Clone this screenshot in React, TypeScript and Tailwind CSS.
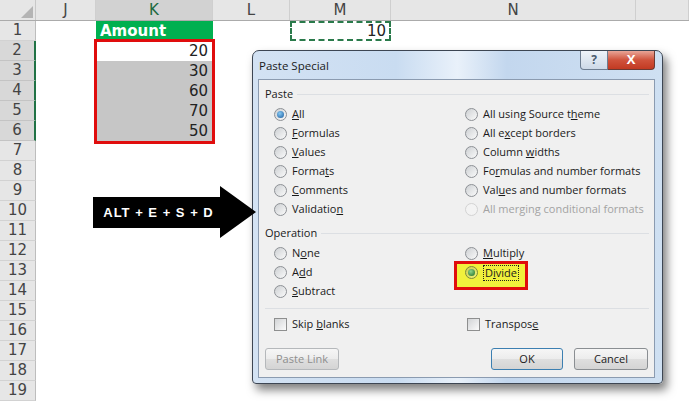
import React from 'react';

const colW = ['w-[60px]', 'w-[117px]', 'w-[77px]', 'w-[101px]', 'w-[245px]', 'flex-1'];
const colNames = ['J', 'K', 'L', 'M', 'N', ''];
const amounts: { [row: number]: number } = { 2: 20, 3: 30, 4: 60, 5: 70, 6: 50 };

function Radio({ on, green, off }: { on?: boolean; green?: boolean; off?: boolean }) {
  return (
    <span
      className={`flex h-[13px] w-[13px] shrink-0 items-center justify-center rounded-full border ${
        off
          ? 'border-[#d3d3d3] bg-[#f3f3f3]'
          : green
          ? 'border-[#7d8a3a] bg-[linear-gradient(135deg,#c9cc52,#f4f47a)]'
          : 'border-[#8d9095] bg-[linear-gradient(135deg,#cdd0d3,#fafafa)]'
      }`}
    >
      {on && (
        <span
          className={`h-[7px] w-[7px] rounded-full ${
            green
              ? 'bg-[radial-gradient(circle_at_40%_35%,#8fd58a,#1d6b22)]'
              : 'bg-[radial-gradient(circle_at_40%_35%,#86c9f4,#1a5a9c)]'
          }`}
        />
      )}
    </span>
  );
}

function Opt({ children, on, off }: { children: React.ReactNode; on?: boolean; off?: boolean }) {
  return (
    <div className="flex h-[19px] items-center gap-[5px]">
      <Radio on={on} off={off} />
      <span className={off ? 'text-[#a3a3a3]' : ''}>{children}</span>
    </div>
  );
}

function Check({ children }: { children: React.ReactNode }) {
  return (
    <div className="flex h-[19px] items-center gap-[5px]">
      <span className="h-[13px] w-[13px] border border-[#8e8f8f] bg-[linear-gradient(135deg,#d2d4d6,#fbfbfb)]" />
      <span>{children}</span>
    </div>
  );
}

function Section({ title }: { title: string }) {
  return (
    <div className="flex h-[18px] items-center gap-[4px]">
      <span>{title}</span>
      <span className="flex-1 border-t border-[#dcdfe3]" />
    </div>
  );
}

function Btn({ children, w, def, off }: { children: React.ReactNode; w: string; def?: boolean; off?: boolean }) {
  return (
    <div
      className={`flex h-full items-center justify-center rounded-[3px] border bg-[linear-gradient(#f6f6f6,#ececec_50%,#dfdfdf_50%,#d4d4d4)] ${w} ${
        def ? 'border-[#3c7fb1]' : 'border-[#8a8e92]'
      } ${off ? 'border-[#b5b8bb] text-[#8e8e8e]' : ''}`}
    >
      {children}
    </div>
  );
}

function Dialog() {
  return (
    <div className="absolute left-[252px] top-[50px] flex w-[411px] flex-col rounded-t-[7px] rounded-b-[4px] border border-[#3d4653] bg-[linear-gradient(90deg,#d3e2f3_0%,#c9dcf1_35%,#e9f1fa_50%,#c3d7ee_62%,#cfe0f2_100%)] pb-[5px] pl-[5px] pr-[7px] font-['Open_Sans',sans-serif] text-[11px] text-[#1a1a1a] shadow-[4px_6px_10px_rgba(0,0,0,0.5)]">
      <div className="flex h-[28px] justify-between">
        <span className="self-center pl-[1px] pt-[2px] text-[11.5px]">Paste Special</span>
        <div className="flex h-[19px]">
          <div className="flex w-[28px] items-center justify-center rounded-bl-[4px] border border-t-0 border-[#6d7d91] bg-[linear-gradient(#eef3f9,#cdd9e7)] text-[12px] font-bold text-[#4a5a6e]">
            ?
          </div>
          <div className="flex w-[47px] items-center justify-center rounded-br-[4px] border border-l-0 border-t-0 border-[#6b3a33] bg-[linear-gradient(#e9a597,#d0533c_50%,#c23a22)] text-[13px] font-bold text-white">
            X
          </div>
        </div>
      </div>
      <div className="flex flex-col border border-[#8b9bb0] bg-[#f0f0f0] px-[6px] pb-[7px] pt-[5px] pr-[5px]">
        <Section title="Paste" />
        <div className="ml-[9px] mt-[2px] flex">
          <div className="flex w-[191px] flex-col">
            <Opt on>
              <u>A</u>ll
            </Opt>
            <Opt>
              <u>F</u>ormulas
            </Opt>
            <Opt>
              <u>V</u>alues
            </Opt>
            <Opt>
              Forma<u>t</u>s
            </Opt>
            <Opt>
              <u>C</u>omments
            </Opt>
            <Opt>
              Validatio<u>n</u>
            </Opt>
          </div>
          <div className="flex flex-col">
            <Opt>
              All using Source t<u>h</u>eme
            </Opt>
            <Opt>
              All e<u>x</u>cept borders
            </Opt>
            <Opt>
              Column <u>w</u>idths
            </Opt>
            <Opt>
              Fo<u>r</u>mulas and number formats
            </Opt>
            <Opt>
              Val<u>u</u>es and number formats
            </Opt>
            <Opt off>All merging conditional formats</Opt>
          </div>
        </div>

        <div className="mt-[5px]">
          <Section title="Operation" />
        </div>
        <div className="ml-[9px] mt-[2px] flex">
          <div className="flex w-[191px] flex-col">
            <Opt>
              N<u>o</u>ne
            </Opt>
            <Opt>
              A<u>d</u>d
            </Opt>
            <Opt>
              <u>S</u>ubtract
            </Opt>
          </div>
          <div className="flex flex-col">
            <Opt>
              <u>M</u>ultiply
            </Opt>
            <div className="relative flex h-[19px] items-center gap-[5px]">
              <span className="absolute left-[-11px] top-[-2px] h-[29px] w-[74px] border-[3px] border-[#e00d0d] bg-[#f1f13c]" />
              <span className="relative">
                <Radio on green />
              </span>
              <span className="relative border border-dotted border-[#222] px-[1px] leading-[14px]">
                D<u>i</u>vide
              </span>
            </div>
          </div>
        </div>

        <div className="mt-[7px] border-t border-[#dcdfe3]" />
        <div className="ml-[9px] mt-[6px] flex">
          <div className="w-[193px]">
            <Check>
              Skip <u>b</u>lanks
            </Check>
          </div>
          <Check>
            Transpos<u>e</u>
          </Check>
        </div>

        <div className="mr-[1px] mt-[14px] flex h-[22px]">
          <Btn w="w-[74px]" off>
            Paste Link
          </Btn>
          <div className="flex-1" />
          <Btn w="w-[72px]" def>
            OK
          </Btn>
          <div className="w-[11px]" />
          <Btn w="w-[74px]">Cancel</Btn>
        </div>
      </div>
    </div>
  );
}

export default function App() {
  const rows = Array.from({ length: 19 }, (_, i) => i + 1);
  return (
    <div className="relative h-[401px] w-[689px] overflow-hidden bg-white font-['DejaVu_Sans',sans-serif] text-[15px] text-[#222]">
      {/* column headers */}
      <div className="flex h-[21px] border-b border-[#ababab] bg-[#e6e6e6] text-[#444]">
        <div className="relative w-[36px] border-r border-[#c8c8c8]">
          <svg className="absolute right-[2px] bottom-[2px]" width="12" height="12" viewBox="0 0 12 12">
            <polygon points="12,0 12,12 0,12" fill="#b4b4b4" />
          </svg>
        </div>
        {colNames.map((c, i) => (
          <div
            key={i}
            className={`flex items-center justify-center border-r border-[#cfcfcf] ${colW[i]} ${
              c === 'K' ? 'bg-[#d2d2d2] text-[#1d6a3f]' : ''
            }`}
          >
            {c}
          </div>
        ))}
      </div>

      {/* rows */}
      {rows.map((r) => {
        const sel = r >= 2 && r <= 6;
        return (
          <div key={r} className="flex h-[20px]">
            <div
              className={`flex w-[36px] items-center justify-center border-b text-[#444] ${
                sel
                  ? 'border-b-[#c4c4c4] border-r-2 border-r-[#217346] bg-[#d8d8d8]'
                  : 'border-b-[#d2d2d2] border-r border-r-[#bdbdbd] bg-[#e6e6e6]'
              }`}
            >
              {r}
            </div>
            <div className={colW[0]} />
            {r === 1 ? (
              <div className={`flex items-center bg-[#00b050] pl-[4px] font-bold text-white ${colW[1]}`}>Amount</div>
            ) : amounts[r] ? (
              <div className={`flex items-center justify-end pr-[5px] ${colW[1]} ${r === 2 ? 'bg-white' : 'bg-[#c6c6c6]'}`}>
                {amounts[r]}
              </div>
            ) : (
              <div className={colW[1]} />
            )}
            <div className={colW[2]} />
            {r === 1 ? (
              <div className={`flex items-center justify-end border-2 border-dashed border-[#2a7a4b] pr-[3px] ${colW[3]}`}>10</div>
            ) : (
              <div className={colW[3]} />
            )}
            <div className={colW[4]} />
            <div className={colW[5]} />
          </div>
        );
      })}

      {/* red box around the amounts */}
      <div className="absolute left-[94px] top-[39px] h-[105px] w-[121px] border-[3px] border-[#e00d0d]" />

      <Dialog />

      {/* shortcut arrow */}
      <svg className="absolute left-[93px] top-[186px]" width="164" height="53" viewBox="0 0 164 53">
        <polygon points="0,11 127,11 127,0 163,26 127,52 127,42 0,42" fill="#000" />
      </svg>
      <div className="absolute left-[93px] top-[197px] flex h-[31px] w-[131px] items-center justify-center font-['Liberation_Sans',sans-serif] text-[13px] font-bold tracking-[1px] text-white">
        ALT + E + S + D
      </div>
    </div>
  );
}
